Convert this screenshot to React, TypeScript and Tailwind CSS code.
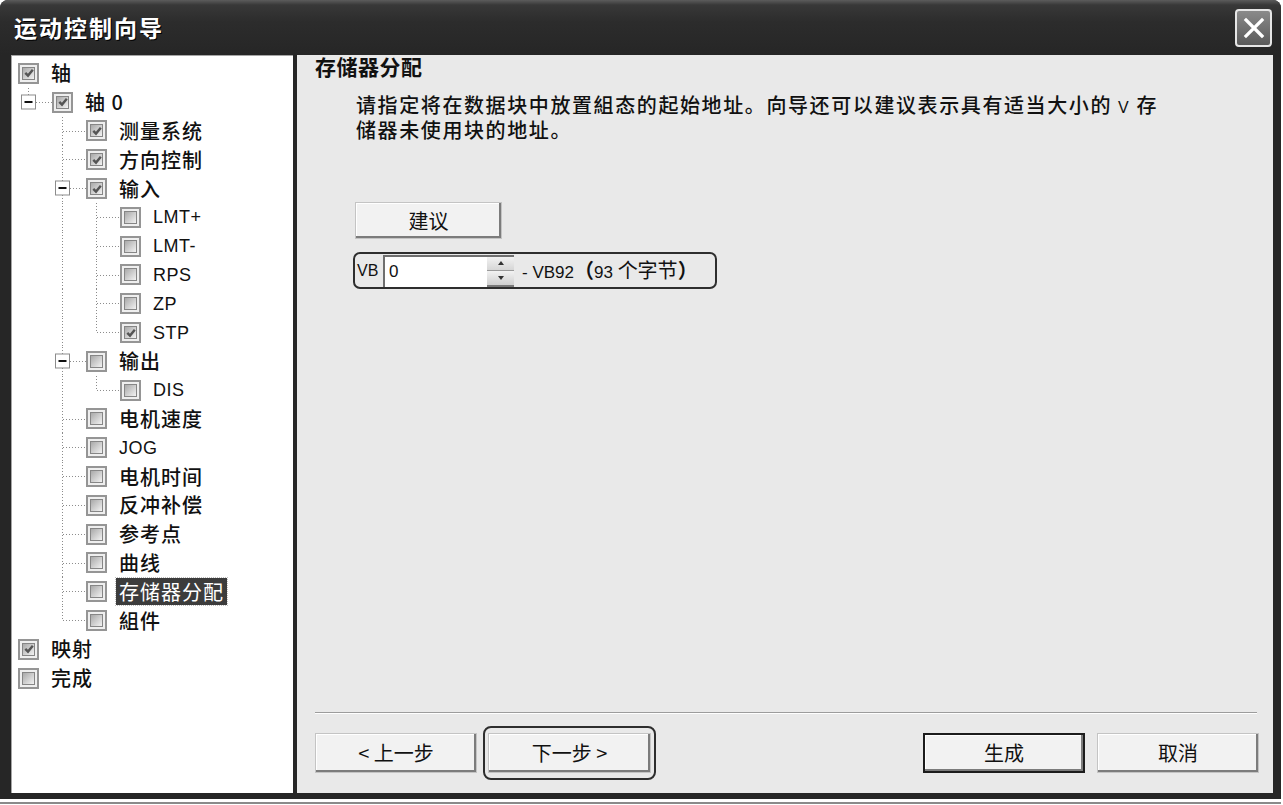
import type { ReactNode } from "react";

const cjk = "font-['Noto_Sans_CJK_SC',sans-serif]";
const latin = "font-['Liberation_Sans','Noto_Sans_CJK_SC',sans-serif]";

type Cell = "empty" | "pipe" | "tee" | "end" | "teeBox" | "endBox";

type TreeRow = {
  label: string;
  cells: Cell[];
  checked?: boolean;
  latin?: boolean;
  selected?: boolean;
};

const rows: TreeRow[] = [
  { label: "轴", cells: [], checked: true },
  { label: "轴 0", cells: ["endBox"], checked: true },
  { label: "测量系统", cells: ["empty", "tee"], checked: true },
  { label: "方向控制", cells: ["empty", "tee"], checked: true },
  { label: "输入", cells: ["empty", "teeBox"], checked: true },
  { label: "LMT+", cells: ["empty", "pipe", "tee"], latin: true },
  { label: "LMT-", cells: ["empty", "pipe", "tee"], latin: true },
  { label: "RPS", cells: ["empty", "pipe", "tee"], latin: true },
  { label: "ZP", cells: ["empty", "pipe", "tee"], latin: true },
  { label: "STP", cells: ["empty", "pipe", "end"], latin: true, checked: true },
  { label: "输出", cells: ["empty", "teeBox"] },
  { label: "DIS", cells: ["empty", "pipe", "end"], latin: true },
  { label: "电机速度", cells: ["empty", "tee"] },
  { label: "JOG", cells: ["empty", "tee"], latin: true },
  { label: "电机时间", cells: ["empty", "tee"] },
  { label: "反冲补偿", cells: ["empty", "tee"] },
  { label: "参考点", cells: ["empty", "tee"] },
  { label: "曲线", cells: ["empty", "tee"] },
  { label: "存储器分配", cells: ["empty", "tee"], selected: true },
  { label: "組件", cells: ["empty", "end"] },
  { label: "映射", cells: [], checked: true },
  { label: "完成", cells: [] },
];

// one indent column of the tree, with its dotted connector lines
function TreeCell({ type }: { type: Cell }) {
  const dot = { stroke: "#8a8a8a", strokeWidth: 1, strokeDasharray: "1 2" };
  const hasBox = type === "teeBox" || type === "endBox";
  const full = type === "pipe" || type === "tee" || type === "teeBox";
  return (
    <svg className="w-[34px] h-[28.8px] shrink-0" viewBox="0 0 34 28.8">
      {type !== "empty" && (
        <line x1="10.5" y1="0" x2="10.5" y2={full ? 28.8 : 14.4} {...dot} />
      )}
      {type !== "empty" && type !== "pipe" && (
        <line x1={hasBox ? 18 : 11} y1="14.5" x2="34" y2="14.5" {...dot} />
      )}
      {hasBox && (
        <g>
          <rect x="3.5" y="7" width="14" height="14" fill="#fff" stroke="#8c8c8c" />
          <line x1="6.5" y1="14" x2="14.5" y2="14" stroke="#111" strokeWidth="2" />
        </g>
      )}
    </svg>
  );
}

function CheckBox({ checked }: { checked?: boolean }) {
  return (
    <span className="w-[21px] h-[21px] shrink-0 border-2 border-[#959595] bg-[#efefef] p-[2px] flex">
      <span className="flex-1 border border-[#868686] bg-[linear-gradient(135deg,#a9a9a9,#f2f2f2)] flex items-center justify-center">
        {checked && (
          <svg className="w-[10px] h-[10px]" viewBox="0 0 10 10">
            <path d="M1.3 4.8 L4 7.6 L8.8 1.8" fill="none" stroke="#555" strokeWidth="2.4" />
          </svg>
        )}
      </span>
    </span>
  );
}

function Tree() {
  return (
    <div className="w-[282px] bg-white border-l border-t border-[#a5a5a5] pt-[3px] flex flex-col">
      {rows.map((r) => (
        <div key={r.label} className="flex items-center h-[28.8px] pl-[6px]">
          {r.cells.map((c, i) => (
            <TreeCell key={i} type={c} />
          ))}
          <CheckBox checked={r.checked} />
          {r.selected ? (
            <span
              className={`ml-[9px] px-[3px] h-[27px] flex items-center bg-[#3c3c3c] text-white outline-1 outline-dotted outline-[#bdbdbd] text-[20px] tracking-[1px] leading-none ${cjk}`}
            >
              {r.label}
            </span>
          ) : (
            <span
              className={`ml-[12px] leading-none text-[#111] ${
                r.latin ? `${latin} text-[18px] tracking-[0.5px]` : `${cjk} font-medium text-[20px] tracking-[1px]`
              }`}
            >
              {r.label}
            </span>
          )}
        </div>
      ))}
    </div>
  );
}

function Btn({ children, def, className = "" }: { children: ReactNode; def?: boolean; className?: string }) {
  return (
    <button
      className={`h-[40px] w-[162px] flex items-center justify-center bg-[#f2f2f2] text-[20px] text-[#111] leading-none ${cjk} ${
        def ? "border-2 border-[#1c1c1c]" : "border border-[#c4c4c4]"
      } shadow-[inset_-2px_-2px_0_#7c7c7c,inset_1px_1px_0_#ffffff] ${className}`}
    >
      {children}
    </button>
  );
}

function SpinBox() {
  return (
    <div className="ml-[38px] mt-[13px] w-[364px] h-[37px] rounded-[7px] border-2 border-[#2e2e2e] flex items-center pl-[2px]">
      <span className={`w-[26px] text-[16px] text-[#111] leading-none ${latin}`}>VB</span>
      <div className="w-[131px] h-[32px] bg-white border-l-2 border-t-2 border-[#6f6f6f] flex">
        <span className={`flex-1 pl-[4px] flex items-center text-[17px] text-[#111] leading-none ${latin}`}>0</span>
        <div className="w-[27px] flex flex-col bg-[#e4e4e4]">
          <div className="flex-1 flex items-center justify-center border-b border-[#9a9a9a] bg-[linear-gradient(180deg,#f2f2f2,#d6d6d6)]">
            <svg className="w-[6px] h-[4px]" viewBox="0 0 6 4">
              <path d="M0 4 L3 0 L6 4Z" fill="#333" />
            </svg>
          </div>
          <div className="flex-1 flex items-center justify-center bg-[linear-gradient(180deg,#f2f2f2,#d0d0d0)] border-b-2 border-[#7a7a7a]">
            <svg className="w-[6px] h-[4px]" viewBox="0 0 6 4">
              <path d="M0 0 L3 4 L6 0Z" fill="#333" />
            </svg>
          </div>
        </div>
      </div>
      <span className={`ml-[8px] text-[17px] text-[#111] leading-none ${latin}`}>
        - VB92
        <span className={`${cjk} text-[20px] font-bold`}>（</span>
        93 <span className={`${cjk} text-[20px]`}>个字节</span>
        <span className={`${cjk} text-[20px] font-bold`}>）</span>
      </span>
    </div>
  );
}

function Content() {
  return (
    <div className="flex-1 bg-[#e9e9e9] flex flex-col pl-[18px] pr-[16px] pb-[20px]">
      <h2 className={`text-[21px] font-bold leading-[22px] text-[#111] tracking-[0.5px] ${cjk}`}>存储器分配</h2>
      <p className={`ml-[41px] mt-[17px] text-[20px] leading-[22px] tracking-[1.6px] text-[#111] font-medium ${cjk}`}>
        请指定将在数据块中放置組态的起始地址。向导还可以建议表示具有适当大小的 <span className={`${latin} font-normal text-[16px]`}>V</span> 存
        <br />
        储器未使用块的地址。
      </p>
      <Btn className="ml-[40px] mt-[61px] !w-[147px] !h-[37px]">建议</Btn>
      <SpinBox />
      <div className="flex-1" />
      <div className="h-[2px] bg-[#9c9c9c] border-b border-white" />
      <div className="mt-[19px] flex items-center -mr-[2px]">
        <Btn>&lt; 上一步</Btn>
        <div className="ml-[6px] -my-[7px] rounded-[8px] border-2 border-[#2e2e2e] px-[3px] py-[5px]">
          <Btn className="!w-[163px]">下一步 &gt;</Btn>
        </div>
        <div className="flex-1" />
        <Btn def>生成</Btn>
        <Btn className="ml-[12px]">取消</Btn>
      </div>
    </div>
  );
}

function TitleBar() {
  return (
    <div className="h-[55px] shrink-0 rounded-t-[8px] bg-[linear-gradient(180deg,#5c5c5c_0px,#383838_5px,#2c2c2c_40%,#262626_100%)] flex items-center pl-[14px] pr-[9px]">
      <span
        className={`text-white text-[23px] font-bold tracking-[2px] leading-none [text-shadow:1px_1px_0_#000] ${cjk}`}
      >
        运动控制向导
      </span>
      <div className="flex-1" />
      <div className="w-[37px] h-[38px] rounded-[4px] border-2 border-[#e6e6e6] bg-[linear-gradient(180deg,#8a8a8a,#5a5a5a)] flex items-center justify-center">
        <svg className="w-[22px] h-[22px]" viewBox="0 0 22 22">
          <path d="M3 3 L19 19 M19 3 L3 19" stroke="#fff" strokeWidth="3.2" strokeLinecap="square" />
        </svg>
      </div>
    </div>
  );
}

export default function App() {
  return (
    <div className="w-[1283px] h-[805px] bg-white overflow-hidden">
      <div className="w-[1281px] h-[799px] bg-[#262626] rounded-t-[8px] flex flex-col">
        <TitleBar />
        <div className="flex flex-1 pl-[11px] pr-[8px] pb-[6px] gap-[4px]">
          <Tree />
          <Content />
        </div>
      </div>
      <div className="mt-[3px] h-[2px] w-[1281px] bg-[#8a8a8a]" />
    </div>
  );
}
